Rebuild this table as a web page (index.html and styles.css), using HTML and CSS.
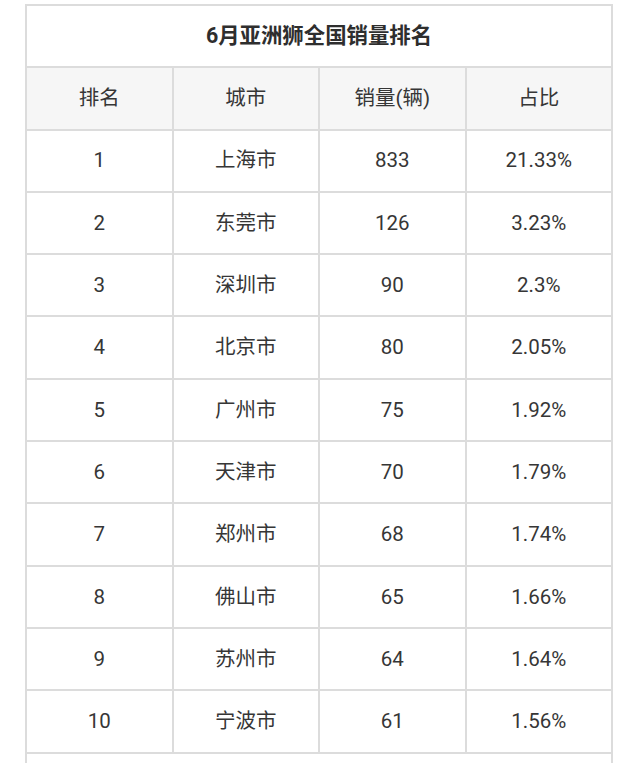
FILE: index.html
```html
<!DOCTYPE html>
<html lang="zh-CN">
<head>
<meta charset="utf-8">
<title>6月亚洲狮全国销量排名</title>
<link rel="stylesheet" href="styles.css">
</head>
<body>
<table class="rank">
  <tr class="title-row"><th colspan="4" class="title">6月亚洲狮全国销量排名</th></tr>
  <tr class="head-row"><th>排名</th><th>城市</th><th>销量(辆)</th><th>占比</th></tr>
  <tr><td>1</td><td>上海市</td><td>833</td><td>21.33%</td></tr>
  <tr><td>2</td><td>东莞市</td><td>126</td><td>3.23%</td></tr>
  <tr><td>3</td><td>深圳市</td><td>90</td><td>2.3%</td></tr>
  <tr><td>4</td><td>北京市</td><td>80</td><td>2.05%</td></tr>
  <tr><td>5</td><td>广州市</td><td>75</td><td>1.92%</td></tr>
  <tr><td>6</td><td>天津市</td><td>70</td><td>1.79%</td></tr>
  <tr><td>7</td><td>郑州市</td><td>68</td><td>1.74%</td></tr>
  <tr><td>8</td><td>佛山市</td><td>65</td><td>1.66%</td></tr>
  <tr><td>9</td><td>苏州市</td><td>64</td><td>1.64%</td></tr>
  <tr><td>10</td><td>宁波市</td><td>61</td><td>1.56%</td></tr>
  <tr class="foot-row"><td colspan="4">&nbsp;</td></tr>
</table>
</body>
</html>
```

FILE: styles.css
```css
html, body {
  margin: 0;
  padding: 0;
  background: #ffffff;
}

body {
  padding: 4px 0 0 25px;
  font-family: Roboto, "Noto Sans CJK SC", sans-serif;
  color: #363636;
}

.rank {
  border-collapse: collapse;
  width: 588px;
  table-layout: fixed;
}

.rank th,
.rank td {
  border: 2px solid #dcdcdc;
  text-align: center;
  vertical-align: middle;
  padding: 0;
  height: 60.3px;
  font-size: 20.5px;
  font-weight: normal;
  line-height: 1.2;
}

.rank th.title {
  font-weight: bold;
  font-size: 21.4px;
  color: #2e2e2e;
  background: #ffffff;
}

.head-row th {
  background: #f6f6f6;
}
```
